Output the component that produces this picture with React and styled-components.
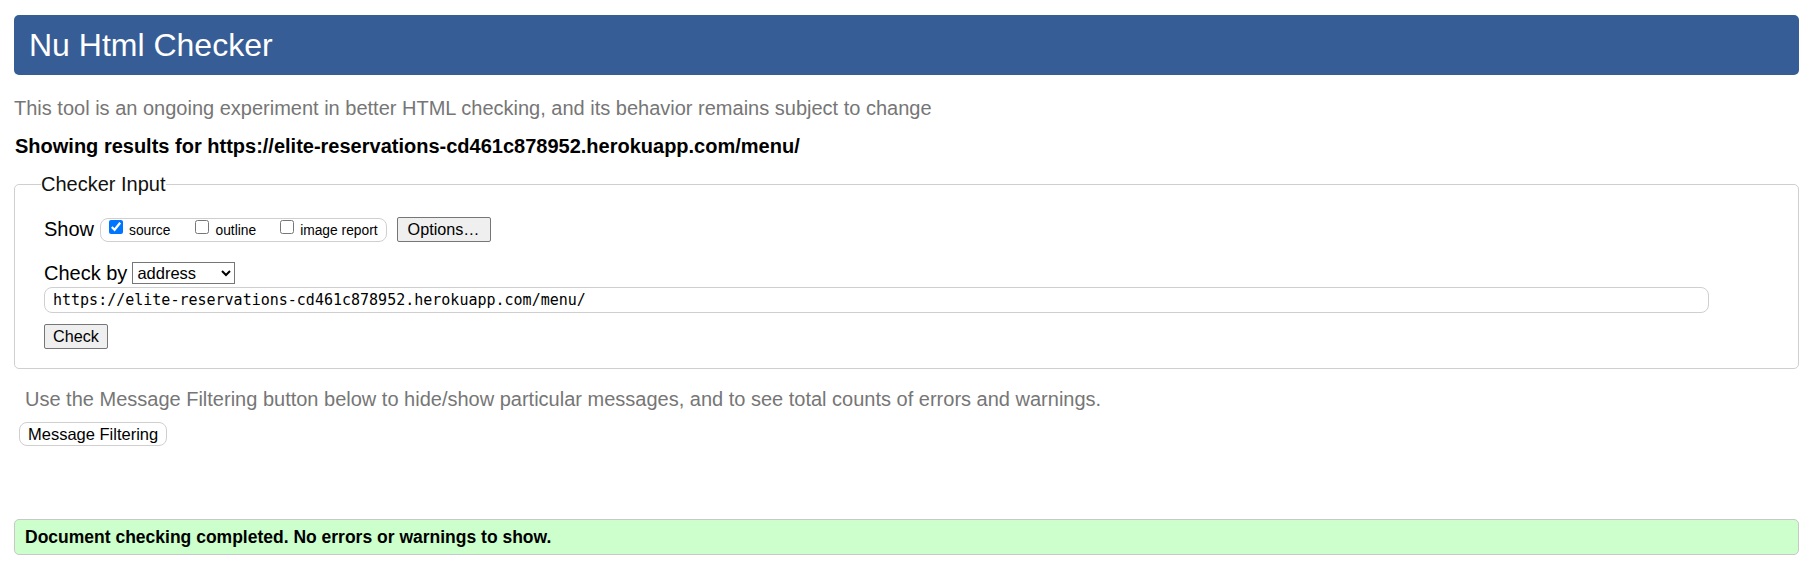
import React from "react";
import styled, { createGlobalStyle } from "styled-components";

const GlobalStyle = createGlobalStyle`
  html, body {
    margin: 0;
    padding: 0;
    background: #ffffff;
  }
  body {
    font-family: "Liberation Sans", Arial, sans-serif;
    color: #000;
  }
`;

const Page = styled.div`
  padding: 15px 18px 0 14px;
`;

const Heading = styled.h1`
  margin: 0;
  height: 60px;
  line-height: 60px;
  padding-left: 15px;
  background: #365d95;
  color: #fff;
  border-radius: 5px;
  font-size: 32px;
  font-weight: normal;
`;

const Intro = styled.p`
  margin: ${(p) => p.top || 21}px 0 0 ${(p) => p.indent || 0}px;
  font-size: 20px;
  line-height: 24px;
  color: #767676;
`;

const Results = styled.p`
  margin: 14px 0 0 1px;
  font-size: 20px;
  line-height: 24px;
  font-weight: bold;
  color: #000;
`;

const Fieldset = styled.fieldset`
  margin: 15px 0 0 0;
  padding: 0 20px 19px 29px;
  border: 1px solid #cfcfcf;
  border-radius: 5px;
  min-width: 0;
`;

const Legend = styled.legend`
  padding: 0;
  margin-left: -3px;
  font-size: 20px;
  line-height: 23px;
  color: #111;
`;

const Row = styled.div`
  display: flex;
  align-items: center;
  height: ${(p) => p.h || 25}px;
  margin-top: ${(p) => p.top || 0}px;
`;

const Label = styled.span`
  font-size: 20px;
  margin-right: ${(p) => p.gap || 0}px;
`;

const Pill = styled.div`
  display: flex;
  align-items: flex-start;
  height: 22px;
  padding: 0 8px;
  border: 1px solid #cfcfcf;
  border-radius: 8px;
  margin-right: 10px;
`;

const Choice = styled.label`
  display: flex;
  align-items: flex-start;
  font-size: 13.8px;
  margin-right: ${(p) => p.gap || 0}px;

  input {
    margin: 1px 6px 0 0;
    width: 14px;
    height: 14px;
  }

  span {
    padding-top: 4px;
  }
`;

const Button = styled.button`
  font-family: "Liberation Sans", Arial, sans-serif;
  font-size: 16.2px;
  height: 25px;
  padding: 0 ${(p) => p.pad || 10}px;
  background: #efefef;
  color: #000;
  border: 1px solid #767676;
  border-radius: 2px;
`;

const Select = styled.select`
  font-family: "Liberation Sans", Arial, sans-serif;
  font-size: 16.5px;
  width: 103px;
  height: 22px;
  margin-left: 5px;
  border: 1px solid #767676;
  border-radius: 0;
  background: #fff;
  color: #000;
`;

const UrlInput = styled.input`
  display: block;
  box-sizing: border-box;
  width: 1665px;
  height: 26px;
  margin-top: 3px;
  padding: 0 8px;
  border: 1px solid #cfcfcf;
  border-radius: 8px;
  font-family: "DejaVu Sans Mono", "Liberation Mono", monospace;
  font-size: 15px;
  color: #000;
`;

const FilterButton = styled.button`
  display: block;
  margin: 11px 0 0 5px;
  height: 24px;
  padding: 0 8px;
  background: #fff;
  border: 1px solid #cfcfcf;
  border-radius: 8px;
  font-family: "Liberation Sans", Arial, sans-serif;
  font-size: 16.5px;
  color: #000;
`;

const Success = styled.div`
  margin-top: 73px;
  height: 34px;
  line-height: 34px;
  padding-left: 10px;
  background: #ccffcc;
  border: 1px solid #c8c8c8;
  border-radius: 5px;
  font-size: 17.5px;
  font-weight: bold;
  color: #000;
`;

export default function App() {
  const url = "https://elite-reservations-cd461c878952.herokuapp.com/menu/";
  return (
    <Page>
      <GlobalStyle />
      <Heading>Nu Html Checker</Heading>
      <Intro>
        This tool is an ongoing experiment in better HTML checking, and its
        behavior remains subject to change
      </Intro>
      <Results>Showing results for {url}</Results>
      <Fieldset>
        <Legend>Checker Input</Legend>
        <Row top={21}>
          <Label gap={6}>Show</Label>
          <Pill>
            <Choice gap={25}>
              <input type="checkbox" defaultChecked />
              <span>source</span>
            </Choice>
            <Choice gap={24}>
              <input type="checkbox" />
              <span>outline</span>
            </Choice>
            <Choice>
              <input type="checkbox" />
              <span>image report</span>
            </Choice>
          </Pill>
          <Button pad={10}>Options…</Button>
        </Row>
        <Row top={20} h={22}>
          <Label>Check by</Label>
          <Select defaultValue="address">
            <option value="address">address</option>
            <option value="upload">file upload</option>
            <option value="text">text input</option>
          </Select>
        </Row>
        <UrlInput type="url" defaultValue={url} />
        <Row top={11}>
          <Button pad={8}>Check</Button>
        </Row>
      </Fieldset>
      <Intro top={18} indent={11}>
        Use the Message Filtering button below to hide/show particular
        messages, and to see total counts of errors and warnings.
      </Intro>
      <FilterButton>Message Filtering</FilterButton>
      <Success>Document checking completed. No errors or warnings to show.</Success>
    </Page>
  );
}
